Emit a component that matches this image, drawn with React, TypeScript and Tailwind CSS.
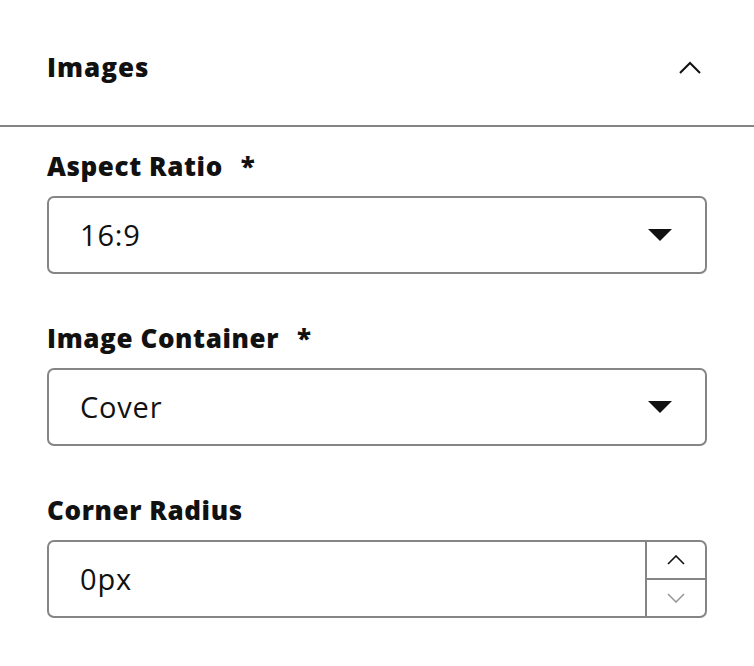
import React from "react";

const font = { fontFamily: "'Open Sans', 'Noto Sans', sans-serif" };

function Caret() {
  return (
    <svg width="26" height="14" viewBox="0 0 26 14" className="shrink-0">
      <path d="M1 1 L25 1 L13 13 Z" fill="#111" />
    </svg>
  );
}

function Select({ value }: { value: string }) {
  return (
    <div className="flex h-[78px] items-center justify-between rounded-[7px] border-2 border-[#858585] bg-white pl-[31px] pr-[32px]">
      <span className="text-[29px] tracking-[0.8px] text-[#111]">{value}</span>
      <Caret />
    </div>
  );
}

function Label({ text, required }: { text: string; required?: boolean }) {
  return (
    <div className="flex h-[30px] items-center gap-[18px] text-[26px] font-extrabold tracking-[0.6px] text-[#111]">
      <span>{text}</span>
      {required && <span>*</span>}
    </div>
  );
}

export default function App() {
  return (
    <div className="min-h-[666px] w-[754px] bg-white" style={font}>
      <div className="flex h-[127px] items-center justify-between border-b-2 border-[#858585] pl-[47px] pr-[52px] pt-[10px]">
        <span className="text-[26px] font-extrabold tracking-[1px] text-[#111]">Images</span>
        <svg width="24" height="14" viewBox="0 0 24 14">
          <path d="M2 12 L12 2 L22 12" fill="none" stroke="#111" strokeWidth="2" />
        </svg>
      </div>
      <div className="flex flex-col px-[47px] pt-[24px]">
        <Label text="Aspect Ratio" required />
        <div className="mt-[15px]">
          <Select value="16:9" />
        </div>
        <div className="mt-[49px]">
          <Label text="Image Container" required />
        </div>
        <div className="mt-[15px]">
          <Select value="Cover" />
        </div>
        <div className="mt-[49px]">
          <Label text="Corner Radius" />
        </div>
        <div className="mt-[15px] flex h-[78px] rounded-[7px] border-2 border-[#858585] bg-white">
          <div className="flex flex-1 items-center pl-[31px] text-[29px] tracking-[0.8px] text-[#111]">0px</div>
          <div className="flex w-[60px] flex-col border-l-2 border-[#858585]">
            <div className="flex flex-1 items-center justify-center border-b-2 border-[#858585]">
              <svg width="18" height="10" viewBox="0 0 18 10">
                <path d="M1 9 L9 1 L17 9" fill="none" stroke="#111" strokeWidth="1.6" />
              </svg>
            </div>
            <div className="flex flex-1 items-center justify-center">
              <svg width="18" height="10" viewBox="0 0 18 10">
                <path d="M1 1 L9 9 L17 1" fill="none" stroke="#999" strokeWidth="1.6" />
              </svg>
            </div>
          </div>
        </div>
      </div>
    </div>
  );
}
